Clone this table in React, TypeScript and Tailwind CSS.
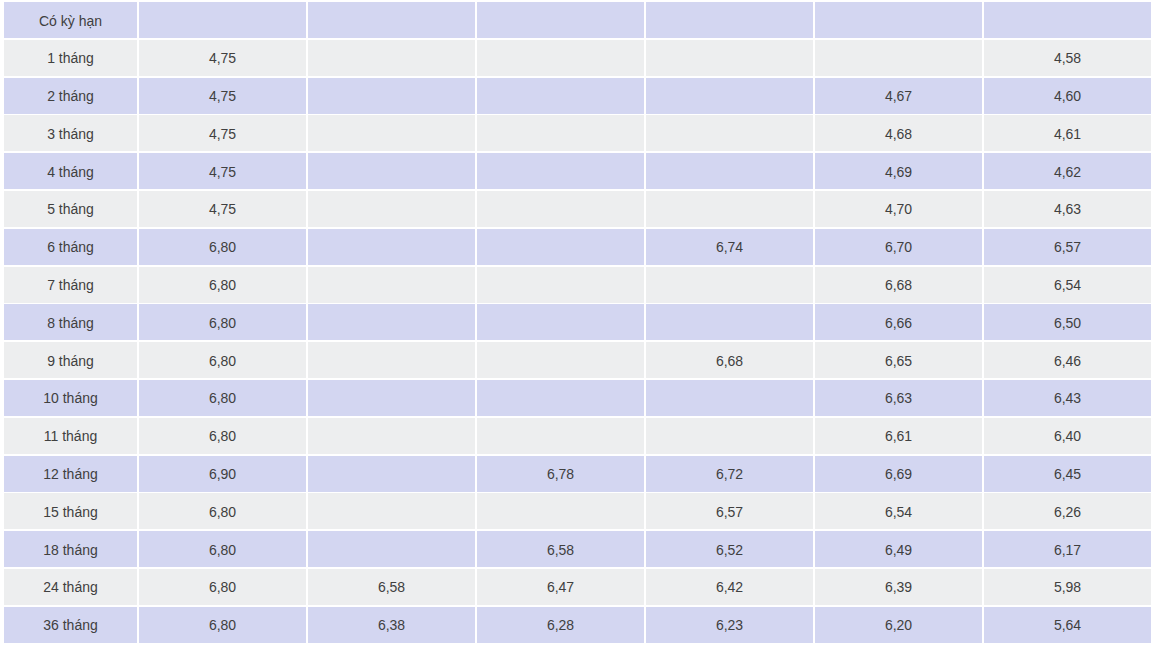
import React from "react";

const rows: [string, string[]][] = [
  ["1 tháng", ["4,75", "", "", "", "", "4,58"]],
  ["2 tháng", ["4,75", "", "", "", "4,67", "4,60"]],
  ["3 tháng", ["4,75", "", "", "", "4,68", "4,61"]],
  ["4 tháng", ["4,75", "", "", "", "4,69", "4,62"]],
  ["5 tháng", ["4,75", "", "", "", "4,70", "4,63"]],
  ["6 tháng", ["6,80", "", "", "6,74", "6,70", "6,57"]],
  ["7 tháng", ["6,80", "", "", "", "6,68", "6,54"]],
  ["8 tháng", ["6,80", "", "", "", "6,66", "6,50"]],
  ["9 tháng", ["6,80", "", "", "6,68", "6,65", "6,46"]],
  ["10 tháng", ["6,80", "", "", "", "6,63", "6,43"]],
  ["11 tháng", ["6,80", "", "", "", "6,61", "6,40"]],
  ["12 tháng", ["6,90", "", "6,78", "6,72", "6,69", "6,45"]],
  ["15 tháng", ["6,80", "", "", "6,57", "6,54", "6,26"]],
  ["18 tháng", ["6,80", "", "6,58", "6,52", "6,49", "6,17"]],
  ["24 tháng", ["6,80", "6,58", "6,47", "6,42", "6,39", "5,98"]],
  ["36 tháng", ["6,80", "6,38", "6,28", "6,23", "6,20", "5,64"]],
];

function Row({ label, values, blue }: { label: string; values: string[]; blue: boolean }) {
  const bg = blue ? "bg-[#d3d6f1]" : "bg-[#edeeef]";
  return (
    <>
      <div className={`${bg} flex items-center justify-center pt-[2px]`}>{label}</div>
      {values.map((v, i) => (
        <div key={i} className={`${bg} flex items-center justify-center pt-[2px]`}>
          {v}
        </div>
      ))}
    </>
  );
}

export default function App() {
  return (
    <div className="w-[1168px] h-[652px] bg-white pl-[4px] pt-[2px] font-['Liberation_Sans',Arial,sans-serif] text-[14px] text-[#404040]">
      <div className="grid w-[1148px] grid-cols-[133px_repeat(6,167px)] auto-rows-[36px] gap-x-[2px] gap-y-[1.8px]">
        <Row label="Có kỳ hạn" values={["", "", "", "", "", ""]} blue />
        {rows.map(([label, values], i) => (
          <Row key={label} label={label} values={values} blue={i % 2 === 1} />
        ))}
      </div>
    </div>
  );
}
